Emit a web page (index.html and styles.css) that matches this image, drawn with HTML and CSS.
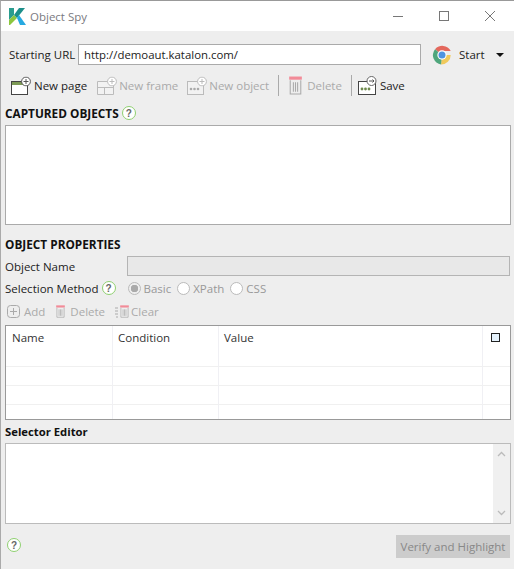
FILE: index.html
```html
<!DOCTYPE html>
<html lang="en">
<head>
  <meta charset="UTF-8">
  <title>Object Spy</title>
  <link rel="stylesheet" href="styles.css">
</head>
<body>
<svg class="defs" width="0" height="0">
  <symbol id="trash" viewBox="0 0 14 18">
    <rect x="1" y="0.5" width="12" height="3" fill="#f28b98"/>
    <path d="M2 4v13h10V4M5 6v9M7 6v9M9 6v9" fill="none" stroke="#aaa"/>
  </symbol>
  <symbol id="plus" viewBox="0 0 10 10">
    <circle cx="5" cy="5" r="4.4" fill="#fff" stroke="currentColor"/>
    <path d="M5 2.5v5M2.5 5h5" stroke="currentColor"/>
  </symbol>
</svg>

<div class="window">
  <div class="titlebar">
    <svg class="logo" width="17" height="17" viewBox="0 0 17 17">
      <path d="M0 0h5v7L0 12z" fill="#2a9d8f"/>
      <path d="M0 17v-5l5-5 3 3-7 7z" fill="#8cc63f"/>
      <path d="M5 7l5-7h6l-8 10z" fill="#1d8f8a"/>
      <path d="M8 10l2-3 7 10h-6z" fill="#27a9e1"/>
    </svg>
    <span class="title">Object Spy</span>
    <div class="winbtns">
      <svg width="12" height="12" viewBox="0 0 12 12"><path d="M1 6.5h10" stroke="#777"/></svg>
      <svg width="12" height="12" viewBox="0 0 12 12"><rect x="1.5" y="1.5" width="9" height="9" fill="none" stroke="#777"/></svg>
      <svg width="12" height="12" viewBox="0 0 12 12"><path d="M1 1l10 10M11 1L1 11" stroke="#777"/></svg>
    </div>
  </div>

  <div class="main">
    <div class="url-row">
      <label class="url-label">Starting URL</label>
      <input class="url-input" type="text" value="http://demoaut.katalon.com/">
      <svg class="chrome" width="20" height="20" viewBox="0 0 20 20">
        <path d="M10 10L3 4.200A9.500 9.500 0 0 1 18.700 6H10z" fill="#e4685d"/>
        <path d="M10 10h8.700A9.500 9.500 0 0 1 9 19.500z" fill="#f0c95c"/>
        <path d="M10 10l-1 9.500A9.500 9.500 0 0 1 3 4.200z" fill="#4fa67c"/>
        <circle cx="10" cy="10" r="4.700" fill="#fff"/>
        <circle cx="10" cy="10" r="3.500" fill="#4f93e0"/>
      </svg>
      <span class="start">Start</span>
      <span class="caret"></span>
    </div>

    <div class="toolbar">
      <div class="tool tool-page">
        <svg width="20" height="20" viewBox="0 0 20 20">
          <rect x="0.500" y="5.500" width="16" height="13" fill="#fff" stroke="#444"/>
          <rect x="1" y="6" width="15" height="3" fill="#7d9a55"/>
          <use href="#plus" x="10" y="0.500" width="10" height="10" color="#555"/>
        </svg>
        <span>New page</span>
      </div>
      <div class="tool tool-frame off">
        <svg width="20" height="20" viewBox="0 0 20 20">
          <path d="M0.500 5.500h16v13h-16zM0.500 11.500h16M7.500 11.500v7" fill="#f2f2f2" stroke="#bbb"/>
          <use href="#plus" x="10" y="0.500" width="10" height="10" color="#bbb"/>
        </svg>
        <span>New frame</span>
      </div>
      <div class="tool tool-object off">
        <svg width="20" height="20" viewBox="0 0 20 20">
          <rect x="0.500" y="5.500" width="16" height="13" fill="#f2f2f2" stroke="#bbb"/>
          <circle cx="4" cy="13" r="1.300" fill="#aaa"/>
          <circle cx="7.500" cy="13" r="1.300" fill="#aaa"/>
          <circle cx="11" cy="13" r="1.300" fill="#aaa"/>
          <use href="#plus" x="10" y="0.500" width="10" height="10" color="#bbb"/>
        </svg>
        <span>New object</span>
      </div>
      <div class="sep"></div>
      <div class="tool tool-delete off">
        <svg width="15" height="19"><use href="#trash" width="15" height="19"/></svg>
        <span>Delete</span>
      </div>
      <div class="sep sep-save"></div>
      <div class="tool">
        <svg width="19" height="20" viewBox="0 0 19 20">
          <rect x="0.500" y="5.500" width="17" height="13" fill="#fff" stroke="#444"/>
          <circle cx="4" cy="13" r="1.400" fill="#6f8a4d"/>
          <circle cx="7.500" cy="13" r="1.400" fill="#6f8a4d"/>
          <circle cx="11" cy="13" r="1.400" fill="#6f8a4d"/>
          <circle cx="13.500" cy="5" r="4.500" fill="#fff" stroke="#666"/>
          <path d="M11 5h5M14.500 3.500L16 5l-1.500 1.500" fill="none" stroke="#555"/>
        </svg>
        <span>Save</span>
      </div>
    </div>

    <div class="heading heading-captured">
      <b>CAPTURED OBJECTS</b>
      <span class="help">?</span>
    </div>
    <div class="box captured"></div>

    <div class="heading heading-props"><b>OBJECT PROPERTIES</b></div>
    <div class="name-row">
      <label class="name-label">Object Name</label>
      <div class="name-input"></div>
    </div>
    <div class="method-row">
      <span class="method-label">Selection Method</span>
      <span class="help">?</span>
      <span class="radio radio-first checked"></span><span class="radio-text">Basic</span>
      <span class="radio"></span><span class="radio-text">XPath</span>
      <span class="radio"></span><span class="radio-text">CSS</span>
    </div>
    <div class="rule-bar">
      <div class="rule rule-add">
        <svg width="13" height="13" viewBox="0 0 13 13"><rect x="0.500" y="0.500" width="12" height="12" rx="3" fill="none" stroke="#aaa"/><path d="M6.500 3v7M3 6.500h7" stroke="#aaa"/></svg>
        <span>Add</span>
      </div>
      <div class="rule rule-delete">
        <svg width="11" height="13"><use href="#trash" width="11" height="13"/></svg>
        <span>Delete</span>
      </div>
      <div class="rule rule-clear">
        <svg width="15" height="13" viewBox="0 0 15 13">
          <path d="M0 3h3M0 6h3M0 9h3M1 12h2" stroke="#aaa"/>
          <use href="#trash" x="4" width="11" height="13"/>
        </svg>
        <span>Clear</span>
      </div>
    </div>

    <table class="rules">
      <thead>
        <tr>
          <th class="col-name">Name</th>
          <th class="col-cond">Condition</th>
          <th class="col-value">Value</th>
          <th class="col-check"><span class="check"></span></th>
        </tr>
      </thead>
      <tbody>
        <tr><td></td><td></td><td></td><td></td></tr>
        <tr><td></td><td></td><td></td><td></td></tr>
        <tr class="last-row"><td></td><td></td><td></td><td></td></tr>
      </tbody>
    </table>

    <div class="heading heading-editor"><b>Selector Editor</b></div>
    <div class="box editor">
      <div class="scrollbar">
        <svg width="9" height="6" viewBox="0 0 9 6"><path d="M1 5l3.500-3.500L8 5" fill="none" stroke="#bbb" stroke-width="1.300"/></svg>
        <svg width="9" height="6" viewBox="0 0 9 6"><path d="M1 1l3.500 3.500L8 1" fill="none" stroke="#bbb" stroke-width="1.300"/></svg>
      </div>
    </div>

    <div class="footer">
      <span class="help footer-help">?</span>
      <button class="verify" disabled>Verify and Highlight</button>
    </div>
  </div>
</div>
</body>
</html>
```

FILE: styles.css
```css
html, body {
  margin: 0;
  padding: 0;
}
body {
  font-family: 'Open Sans', 'Noto Sans', Arial, sans-serif;
  font-size: 11.5px;
  color: #222;
  background: #eee;
}
.defs {
  display: block;
  height: 0;
}
.window {
  width: 514px;
  height: 569px;
  box-sizing: border-box;
  border-top: 1px solid #999;
  border-left: 1px solid #aaa;
  overflow: hidden;
}
.titlebar {
  height: 30px;
  background: #fff;
  display: flex;
  align-items: center;
  padding-left: 8px;
}
.title {
  margin-left: 4px;
  font-size: 11.5px;
  color: #7a7a80;
}
.winbtns {
  margin-left: auto;
  display: flex;
  gap: 34px;
  padding-right: 18px;
}
.main {
  padding: 0 3px 0 4px;
}
.help {
  width: 14px;
  height: 14px;
  box-sizing: border-box;
  flex: none;
  display: flex;
  align-items: center;
  justify-content: center;
  background: #fff;
  border: 1.3px solid #8fd070;
  border-radius: 50%;
  font-family: 'Liberation Sans', Arial, sans-serif;
  font-size: 10px;
  font-weight: 700;
  color: #666;
}
.url-row {
  margin-top: 13px;
  height: 21px;
  display: flex;
  align-items: center;
}
.url-label {
  margin-left: 4px;
  width: 69px;
}
.url-input {
  width: 343px;
  height: 21px;
  box-sizing: border-box;
  border: 1px solid #aaa;
  padding: 0 5px;
  font: inherit;
  font-size: 11.4px;
  color: #222;
  background: #fff;
  border-radius: 0;
  outline: none;
}
.chrome {
  margin-left: 11px;
}
.start {
  margin-left: 7px;
}
.caret {
  margin-left: 11px;
  border-left: 4px solid transparent;
  border-right: 4px solid transparent;
  border-top: 4px solid #111;
}
.toolbar {
  margin-top: 10px;
  height: 21px;
  display: flex;
  align-items: center;
  padding-left: 6px;
}
.tool {
  display: flex;
  align-items: center;
  gap: 3px;
}
.tool.off {
  color: #aaa;
}
.tool-frame {
  margin-left: 10px;
  gap: 2px;
}
.tool-object {
  margin-left: 9px;
  gap: 2px;
}
.tool-delete {
  margin-left: 9px;
  gap: 4px;
}
.sep {
  width: 1px;
  height: 21px;
  background: #aaa;
  margin-left: 9px;
}
.sep-save {
  margin-left: 9px;
  margin-right: 6px;
}
.heading {
  height: 16px;
  display: flex;
  align-items: center;
  gap: 3px;
  color: #111;
}
.heading-captured {
  margin-top: 9px;
  font-size: 11.8px;
}
.heading-props {
  margin-top: 11px;
  font-size: 11.8px;
}
.heading-editor {
  margin-top: 3px;
  font-size: 11.3px;
}
.box {
  width: 506px;
  box-sizing: border-box;
  background: #fff;
  border: 1px solid #aaa;
}
.captured {
  margin-top: 4px;
  height: 100px;
}
.name-row {
  margin-top: 4px;
  height: 20px;
  display: flex;
  align-items: center;
}
.name-label {
  width: 122px;
}
.name-input {
  width: 383px;
  height: 20px;
  box-sizing: border-box;
  background: #e8e8e8;
  border: 1px solid #b4b4b4;
}
.method-row {
  margin-top: 4px;
  height: 16px;
  display: flex;
  align-items: center;
}
.method-row .help {
  margin-left: 3px;
}
.radio {
  width: 13px;
  height: 13px;
  box-sizing: border-box;
  border: 1px solid #bbb;
  border-radius: 50%;
  background: #fff;
  margin-left: 6px;
  margin-right: 3px;
}
.radio-first {
  margin-left: 12px;
}
.radio.checked {
  background: radial-gradient(circle, #aaa 0, #aaa 3.5px, #eee 4px);
}
.radio-text {
  color: #999;
}
.rule-bar {
  margin-top: 7px;
  height: 16px;
  display: flex;
  align-items: center;
  color: #aaa;
  padding-left: 2px;
}
.rule {
  display: flex;
  align-items: center;
  gap: 4px;
}
.rule-delete {
  margin-left: 10px;
}
.rule-clear {
  margin-left: 10px;
  gap: 1px;
}
.rules {
  margin-top: 6px;
  width: 506px;
  height: 95px;
  table-layout: fixed;
  border-collapse: separate;
  border-spacing: 0;
  background: #fff;
  border: 1px solid #999;
}
.rules th {
  box-sizing: border-box;
  height: 40px;
  padding: 4px 0 0 5px;
  text-align: left;
  vertical-align: top;
  font-weight: 400;
  color: #333;
  border-right: 1px solid #f0f0f4;
}
.rules th:last-child, .rules td:last-child {
  border-right: none;
}
.rules td {
  box-sizing: border-box;
  height: 19px;
  padding: 0;
  border-top: 1px solid #f0f0f0;
  border-right: 1px solid #f0f0f4;
}
.rules .last-row td {
  height: 15px;
}
.rules .col-name {
  width: 107px;
  padding-left: 6px;
}
.rules .col-cond {
  width: 106px;
}
.rules .col-check {
  width: 27px;
  padding: 7px 0 0 8px;
}
.check {
  display: block;
  width: 9px;
  height: 9px;
  box-sizing: border-box;
  border: 1.5px solid #222;
  background: #e6f3fd;
}
.editor {
  margin-top: 4px;
  height: 81px;
  display: flex;
  justify-content: flex-end;
  border-color: #bbb;
}
.scrollbar {
  width: 17px;
  background: #f0f0f0;
  display: flex;
  flex-direction: column;
  justify-content: space-between;
  align-items: center;
  padding: 7px 0;
  box-sizing: border-box;
}
.footer {
  margin-top: 11px;
  width: 505px;
  display: flex;
  align-items: flex-start;
  justify-content: space-between;
}
.footer-help {
  margin: 3px 0 0 2px;
}
.verify {
  width: 114px;
  height: 23px;
  padding: 0;
  border: none;
  background: #ccc;
  color: #888;
  font: inherit;
}
```
